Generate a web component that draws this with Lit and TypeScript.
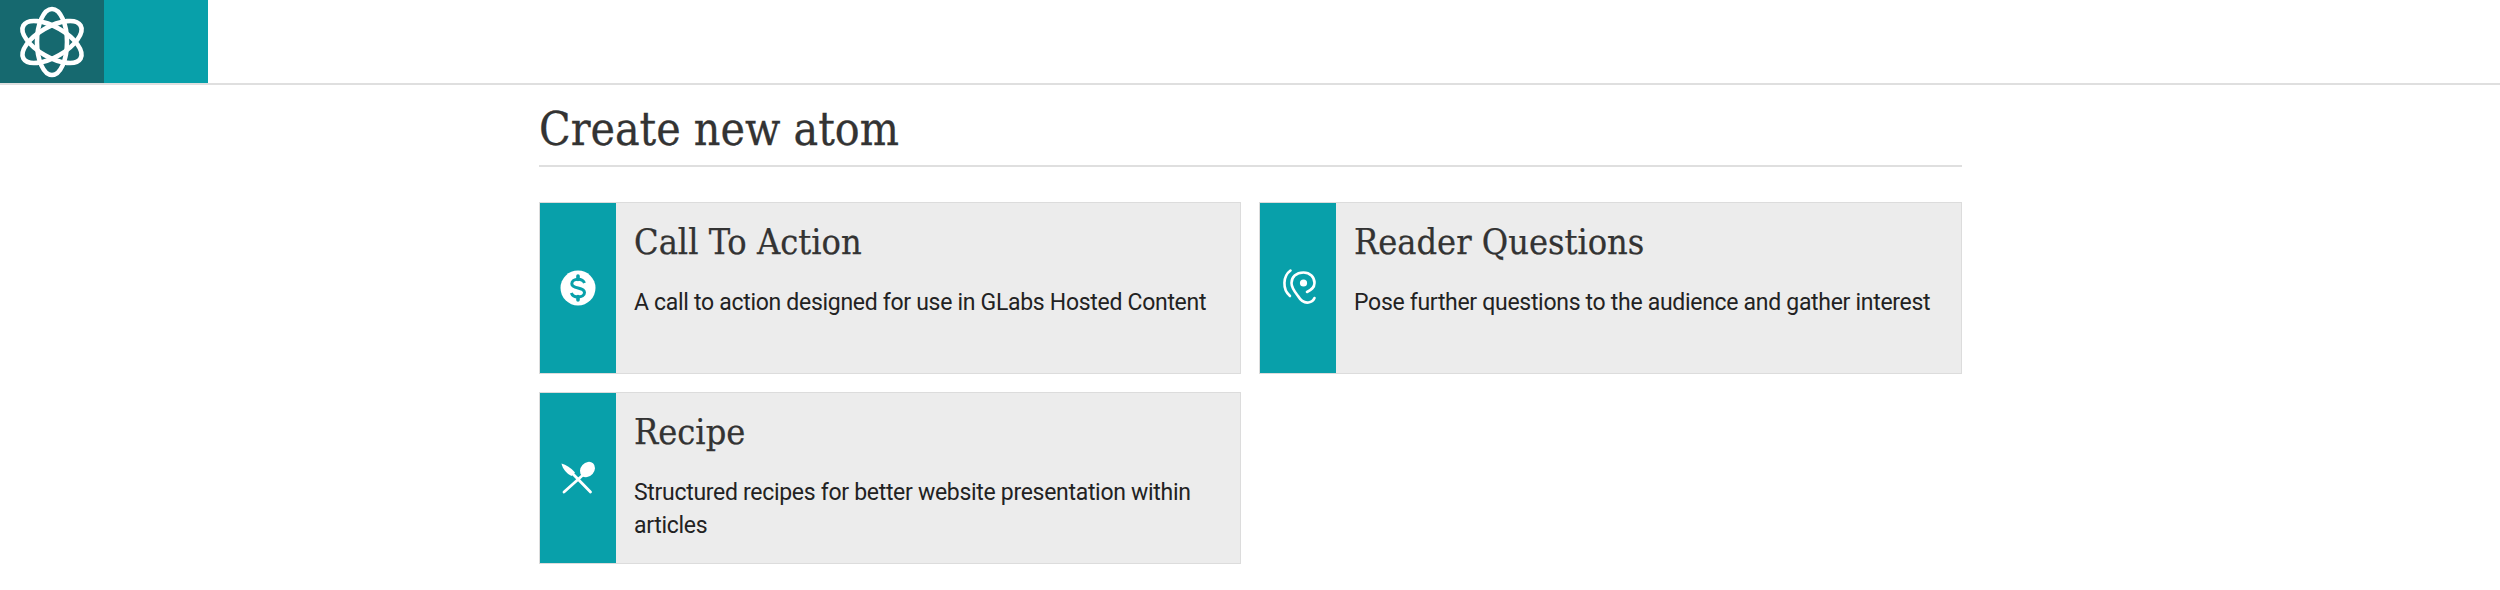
import { LitElement, html, css, svg } from 'lit';
import { customElement } from 'lit/decorators.js';

// viewBoxes follow the crop the icon was traced from
const icons = {
  cta: {
    box: '0 0 36 36',
    body: svg`<circle cx="18" cy="18" r="17.500" fill="#fff"/>
      <path d="M24.500 13c-1-2.600-3.400-3.800-6.500-3.800-3.600 0-6.200 1.800-6.200 4.500 0 5.800 12.700 2.800 12.700 8.800 0 2.800-2.800 4.500-6.500 4.500-3.200 0-5.700-1.300-6.700-4" fill="none" stroke="#08a0aa" stroke-width="3"/>
      <path d="M18 6v3.500M18 26.500V30" stroke="#08a0aa" stroke-width="3.600" stroke-linecap="round"/>`,
  },
  questions: {
    box: '0 0 46 50',
    size: [46, 50],
    body: svg`<g fill="none" stroke="#fff" stroke-width="2.600" stroke-linecap="round">
        <path d="M15.500 7.500C8 13 7 26 15 33"/>
        <path d="M32 29C36 27 39.500 25 39.500 20 39.500 14 35 9.500 28.500 9.500 21 9.500 16.500 14 16.500 20 16.500 25 20 29 23 33 26 38 30 40 33.500 39.500 36 39 38.500 37.500 39.500 35"/>
      </g>
      <circle cx="28.500" cy="20" r="3.600" fill="#fff"/>`,
  },
  recipe: {
    box: '0 0 48 46',
    size: [48, 46],
    body: svg`<path d="M7.500 8.500C12 9.500 17 13 21 17.500L17.500 21C13 19 8.500 14 7.500 8.500z" fill="#fff"/>
      <path d="M19 19 36.500 37" stroke="#fff" stroke-width="2.800" stroke-linecap="round"/>
      <ellipse cx="33.500" cy="14.500" rx="6.800" ry="8.300" fill="#fff" transform="rotate(42 33.500 14.500)"/>
      <path d="M29 20 10 37" stroke="#fff" stroke-width="2.800" stroke-linecap="round"/>`,
  },
};

interface AtomType {
  key: keyof typeof icons;
  title: string;
  description: string;
}

const atomTypes: AtomType[] = [
  { key: 'cta', title: 'Call To Action', description: 'A call to action designed for use in GLabs Hosted Content' },
  { key: 'questions', title: 'Reader Questions', description: 'Pose further questions to the audience and gather interest' },
  { key: 'recipe', title: 'Recipe', description: 'Structured recipes for better website presentation within articles' },
];

@customElement('app-root')
export class AppRoot extends LitElement {
  static styles = css`
    :host {
      display: block;
      min-height: 590px;
      background: #fff;
      color: #333;
      font-family: Roboto, sans-serif;
    }
    .toolbar {
      display: flex;
      height: 83px;
      border-bottom: 2px solid #dfdfdf;
    }
    .logo {
      display: flex;
      align-items: center;
      justify-content: center;
      width: 104px;
      background: #16696f;
    }
    .toolbar-fill {
      width: 104px;
      background: #08a0aa;
    }
    .page {
      width: 1423px;
      margin-left: 539px;
    }
    h1 {
      margin: 0 0 35px;
      padding: 16px 0 8px;
      border-bottom: 2px solid #dfdfdf;
      font: 400 46px/56px 'DejaVu Serif Condensed', 'DejaVu Serif', serif;
      -webkit-text-stroke: 0.3px #333;
      color: #333;
    }
    .grid {
      display: grid;
      grid-template-columns: 702px 703px;
      gap: 18px;
    }
    .card {
      display: flex;
      height: 172px;
      background: #ececec;
      border: 1px solid #dcdcdc;
      box-sizing: border-box;
    }
    .card-icon {
      display: flex;
      flex: none;
      align-items: center;
      justify-content: center;
      width: 76px;
      background: #08a0aa;
    }
    .card-body {
      padding: 17px 18px 0;
    }
    h2 {
      margin: 0 0 22px;
      font: 400 35.800px/44px 'DejaVu Serif Condensed', 'DejaVu Serif', serif;
      -webkit-text-stroke: 0.25px #333;
      color: #333;
    }
    p {
      margin: 0;
      font-size: 23px;
      line-height: 33px;
      letter-spacing: -0.3px;
      color: #222;
    }
  `;

  render() {
    return html`
      <div class="toolbar">
        <div class="logo">
          <svg width="76" height="76" viewBox="0 0 76 76" fill="none" stroke="#fff" stroke-width="4.600">
            <ellipse cx="38" cy="38" rx="15" ry="33"/>
            <ellipse cx="38" cy="38" rx="15" ry="33" transform="rotate(60 38 38)"/>
            <ellipse cx="38" cy="38" rx="15" ry="33" transform="rotate(120 38 38)"/>
          </svg>
        </div>
        <div class="toolbar-fill"></div>
      </div>
      <div class="page">
        <h1>Create new atom</h1>
        <div class="grid">
          ${atomTypes.map((a) => {
            const icon = icons[a.key];
            const [w, h] = 'size' in icon ? icon.size : [36, 36];
            return html`
              <div class="card">
                <div class="card-icon">
                  <svg width=${w} height=${h} viewBox=${icon.box}>${icon.body}</svg>
                </div>
                <div class="card-body">
                  <h2>${a.title}</h2>
                  <p>${a.description}</p>
                </div>
              </div>
            `;
          })}
        </div>
      </div>
    `;
  }
}
